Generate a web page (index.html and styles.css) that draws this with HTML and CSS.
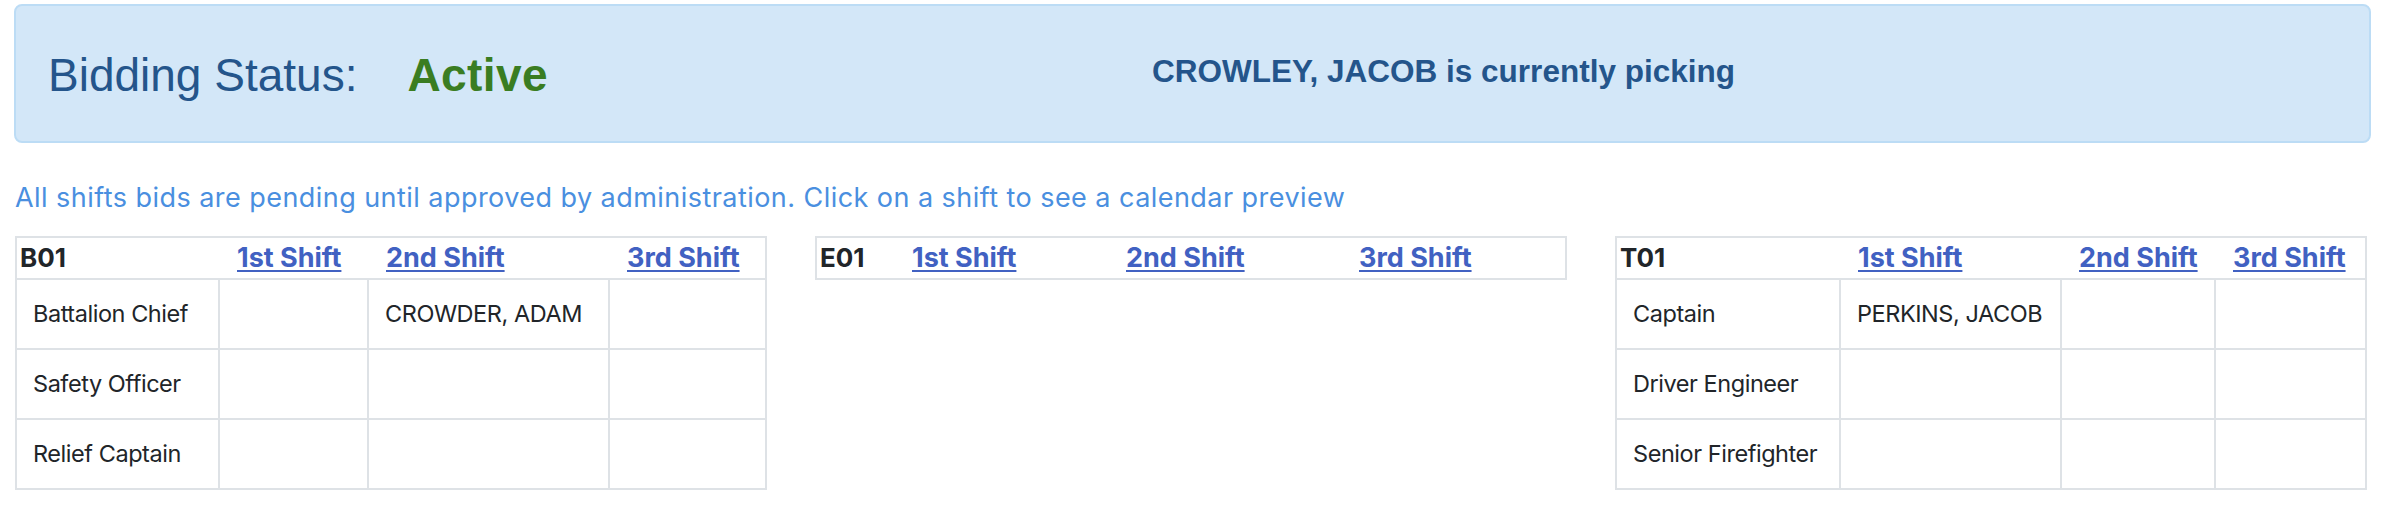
FILE: index.html
```html
<!DOCTYPE html>
<html lang="en">
<head>
<meta charset="utf-8">
<title>Bidding</title>
<link rel="stylesheet" href="styles.css">
</head>
<body>
<div class="page">
  <div class="banner">
    <div class="status"><span class="status-label">Bidding Status:</span><span class="status-value">Active</span></div>
    <div class="picking">CROWLEY, JACOB is currently picking</div>
  </div>
  <p class="note">All shifts bids are pending until approved by administration. Click on a shift to see a calendar preview</p>
  <div class="units">
    <table class="unit unit-b01">
      <colgroup><col class="c1"><col class="c2"><col class="c3"><col class="c4"></colgroup>
      <thead>
        <tr><th>B01</th><th><a href="#">1st Shift</a></th><th><a href="#">2nd Shift</a></th><th><a href="#">3rd Shift</a></th></tr>
      </thead>
      <tbody>
        <tr><td>Battalion Chief</td><td></td><td>CROWDER, ADAM</td><td></td></tr>
        <tr><td>Safety Officer</td><td></td><td></td><td></td></tr>
        <tr><td>Relief Captain</td><td></td><td></td><td></td></tr>
      </tbody>
    </table>
    <table class="unit unit-e01">
      <colgroup><col class="c1"><col class="c2"><col class="c3"><col class="c4"></colgroup>
      <thead>
        <tr><th>E01</th><th><a href="#">1st Shift</a></th><th><a href="#">2nd Shift</a></th><th><a href="#">3rd Shift</a></th></tr>
      </thead>
    </table>
    <table class="unit unit-t01">
      <colgroup><col class="c1"><col class="c2"><col class="c3"><col class="c4"></colgroup>
      <thead>
        <tr><th>T01</th><th><a href="#">1st Shift</a></th><th><a href="#">2nd Shift</a></th><th><a href="#">3rd Shift</a></th></tr>
      </thead>
      <tbody>
        <tr><td>Captain</td><td>PERKINS, JACOB</td><td></td><td></td></tr>
        <tr><td>Driver Engineer</td><td></td><td></td><td></td></tr>
        <tr><td>Senior Firefighter</td><td></td><td></td><td></td></tr>
      </tbody>
    </table>
  </div>
</div>
</body>
</html>
```
FILE: styles.css
```css
* { box-sizing: border-box; }

body {
  margin: 0;
  background: #ffffff;
  color: #212529;
  font-family: Inter, "Noto Sans", sans-serif;
}

.page {
  padding: 4px 13px 0 14px;
}

.banner {
  display: flex;
  align-items: flex-start;
  height: 139px;
  padding: 43px 32px 0 32px;
  background: #d3e7f8;
  border: 2px solid #bcdcf5;
  border-radius: 8px;
  font-family: "Liberation Sans", Arial, sans-serif;
  color: #24558b;
}

.status {
  flex: 0 0 502px;
  font-size: 46px;
  line-height: 53px;
  white-space: nowrap;
}

.status-value {
  margin-left: 50px;
  color: #3a7d22;
  font-weight: bold;
  letter-spacing: 0.4px;
}

.picking {
  flex: 1;
  margin-top: 4px;
  text-align: center;
  font-size: 31.5px;
  line-height: 36px;
  font-weight: bold;
  white-space: nowrap;
}

.note {
  margin: 38px 0 0 1px;
  font-size: 27px;
  line-height: 33px;
  letter-spacing: 0.45px;
  color: #4a8fe0;
  white-space: nowrap;
}

.units {
  display: grid;
  grid-template-columns: repeat(3, 750px);
  column-gap: 50px;
  align-items: start;
  margin: 22px 0 0 1px;
}

.unit {
  width: 750px;
  table-layout: fixed;
  border-collapse: collapse;
  border: 2px solid #dee2e6;
}

.unit th {
  padding: 4px 18px;
  text-align: left;
  font-size: 27px;
  line-height: 32px;
  font-weight: 700;
  color: #212529;
  border-bottom: 2px solid #dee2e6;
  white-space: nowrap;
}

.unit th:first-child {
  padding-left: 3px;
  font-size: 26px;
}

.unit th a {
  color: #4161c2;
  text-decoration: underline;
  text-decoration-thickness: 2px;
  text-underline-offset: 3px;
}

.unit td {
  padding: 20px 16px;
  font-size: 23.5px;
  line-height: 28px;
  letter-spacing: -0.45px;
  color: #212529;
  border: 2px solid #dee2e6;
  white-space: nowrap;
}

.unit-b01 .c1 { width: 203px; }
.unit-b01 .c2 { width: 149px; }
.unit-b01 .c3 { width: 241px; }
.unit-b01 .c4 { width: 157px; }

.unit-e01 .c1 { width: 78px; }
.unit-e01 .c2 { width: 214px; }
.unit-e01 .c3 { width: 233px; }
.unit-e01 .c4 { width: 225px; }

.unit-t01 .c1 { width: 224px; }
.unit-t01 .c2 { width: 221px; }
.unit-t01 .c3 { width: 154px; }
.unit-t01 .c4 { width: 151px; }
```
